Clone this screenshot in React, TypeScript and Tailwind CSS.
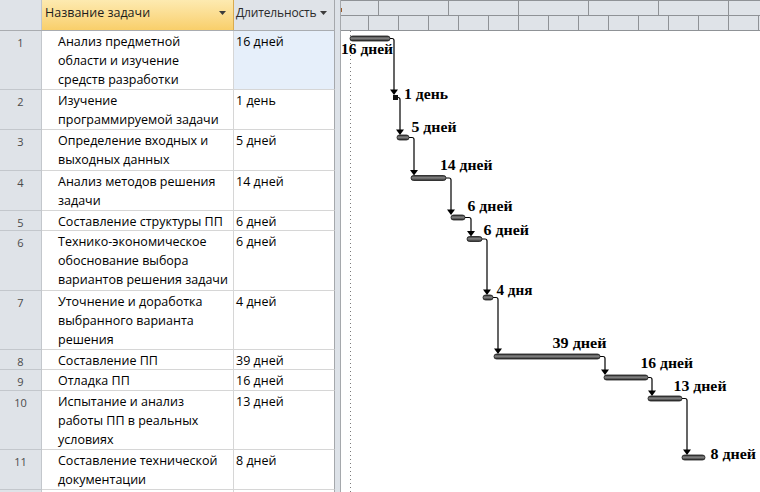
import React from 'react';

interface Row {
  n: number;
  name: string[];
  dur: string;
  h: number;
}

const rows: Row[] = [
  { n: 1, name: ['Анализ предметной', 'области и изучение', 'средств разработки'], dur: '16 дней', h: 59 },
  { n: 2, name: ['Изучение', 'программируемой задачи'], dur: '1 день', h: 40 },
  { n: 3, name: ['Определение входных и', 'выходных данных'], dur: '5 дней', h: 41 },
  { n: 4, name: ['Анализ методов решения', 'задачи'], dur: '14 дней', h: 40 },
  { n: 5, name: ['Составление структуры ПП'], dur: '6 дней', h: 20 },
  { n: 6, name: ['Технико-экономическое', 'обоснование выбора', 'вариантов решения задачи'], dur: '6 дней', h: 60 },
  { n: 7, name: ['Уточнение и доработка', 'выбранного варианта', 'решения'], dur: '4 дней', h: 59 },
  { n: 8, name: ['Составление ПП'], dur: '39 дней', h: 20 },
  { n: 9, name: ['Отладка ПП'], dur: '16 дней', h: 21 },
  { n: 10, name: ['Испытание и анализ', 'работы ПП в реальных', 'условиях'], dur: '13 дней', h: 59 },
  { n: 11, name: ['Составление технической', 'документации'], dur: '8 дней', h: 40 },
];

// bars in page coordinates
interface Bar {
  x1: number;
  x2: number;
  top: number;
  label: string;
  lx: number;
  ly: number;
  lw: number; // label width
  vx?: number; // vertical connector x to the next bar
}

const bars: Bar[] = [
  { x1: 350, x2: 390, top: 36, label: '16 дней', lx: 341, ly: 54, lw: 52, vx: 394 },
  { x1: 393, x2: 398, top: 95, label: '1 день', lx: 404, ly: 99, lw: 44, vx: 400 },
  { x1: 397, x2: 409, top: 135, label: '5 дней', lx: 411.5, ly: 132, lw: 45, vx: 414 },
  { x1: 411, x2: 446, top: 175.5, label: '14 дней', lx: 440, ly: 170, lw: 52.5, vx: 451 },
  { x1: 451, x2: 465, top: 215, label: '6 дней', lx: 467.5, ly: 211, lw: 45, vx: 471 },
  { x1: 467, x2: 482, top: 236.5, label: '6 дней', lx: 483.5, ly: 235, lw: 45.5, vx: 487 },
  { x1: 483, x2: 493, top: 295, label: '4 дня', lx: 496.5, ly: 295, lw: 36, vx: 498 },
  { x1: 494, x2: 600, top: 354, label: '39 дней', lx: 552.5, ly: 347.5, lw: 54, vx: 605 },
  { x1: 604, x2: 648, top: 375, label: '16 дней', lx: 640.5, ly: 367.5, lw: 52.5, vx: 652 },
  { x1: 648, x2: 682, top: 396, label: '13 дней', lx: 673.5, ly: 391, lw: 53, vx: 687 },
  { x1: 682, x2: 705, top: 455, label: '8 дней', lx: 710.5, ly: 459, lw: 45.5 },
];

const topTier = [38, 70, 70, 70, 70, 70, 70];
const bottomTier = [28, 30, 30, 30, 30, 30, 30, 30, 30, 30, 30, 30, 30, 30, 30];

const DropArrow = () => (
  <svg width="7" height="4" viewBox="0 0 7 4" className="shrink-0">
    <path d="M0 0 H7 L3.5 4 Z" fill="#3c3c3c" />
  </svg>
);

const TaskTable = () => (
  <div className="flex flex-col w-[335px] shrink-0">
    {/* Header */}
    <div className="flex h-[31px] shrink-0 border-b border-[#a9acb0]">
      <div className="w-[42px] shrink-0 bg-[#dfe3e8] border-r border-[#c2c6cb]" />
      <div className="w-[192px] shrink-0 flex items-start justify-between pl-[3px] pr-[7px] pt-[4px] bg-gradient-to-b from-[#fdeab0] to-[#f9cf6a] border-r border-[#d9ab4f]">
        <span className="text-[12.5px] leading-[17px] text-[#1c1c1c]">Название задачи</span>
        <div className="pt-[7px]"><DropArrow /></div>
      </div>
      <div className="w-[101px] shrink-0 flex items-start justify-between pl-[2px] pr-[7px] pt-[4px] bg-[#dfe3e8] border-r border-[#a5a8ac]">
        <span className="text-[12px] leading-[17px] tracking-[-0.15px] text-[#2a2a2a]">Длительность</span>
        <div className="pt-[7px]"><DropArrow /></div>
      </div>
    </div>
    {/* Rows */}
    {rows.map((r) => (
      <div key={r.n} className="flex shrink-0" style={{ height: r.h }}>
        <div className="w-[42px] shrink-0 bg-[#dfe3e8] border-r border-b border-[#c3c7cc] flex justify-center pt-[3px]">
          <span className="text-[11px] leading-[17px] text-[#4a4a4a]">{r.n}</span>
        </div>
        <div className="w-[192px] shrink-0 border-r border-b border-[#d6d6d6] pl-[16px] pt-[1px] bg-white">
          {r.name.map((l) => (
            <div key={l} className="text-[12.5px] leading-[19px] text-black whitespace-nowrap">{l}</div>
          ))}
        </div>
        <div className={`w-[101px] shrink-0 border-r border-b border-r-[#a5a8ac] border-b-[#d6d6d6] pl-[2px] pt-[1px] ${r.n === 1 ? 'bg-[#e6effa]' : 'bg-white'}`}>
          <div className="text-[12.5px] leading-[19px] text-black whitespace-nowrap">{r.dur}</div>
        </div>
      </div>
    ))}
    <div className="flex flex-1">
      <div className="w-[42px] shrink-0 bg-[#dfe3e8] border-r border-[#c3c7cc]" />
      <div className="w-[192px] shrink-0 border-r border-[#d6d6d6] bg-white" />
      <div className="w-[101px] shrink-0 border-r border-[#a5a8ac] bg-white" />
    </div>
  </div>
);

const GanttChart = () => (
  <div className="relative flex flex-col flex-1 min-w-0 overflow-hidden">
    {/* Timescale */}
    <div className="flex flex-col h-[31px] shrink-0 bg-[#dfe3e8] border-t border-b border-[#8f9296]">
      <div className="flex h-[15px] border-b border-[#8f9296]">
        {topTier.map((w, i) => (
          <div key={i} className="shrink-0 border-r border-[#8f9296]" style={{ width: w }} />
        ))}
      </div>
      <div className="flex flex-1">
        {bottomTier.map((w, i) => (
          <div key={i} className="shrink-0 border-r border-[#8f9296]" style={{ width: w }} />
        ))}
      </div>
    </div>
    <div className="absolute left-0 top-[8px] w-px h-[4px] bg-[#9a5a2a]" />
    {/* Body */}
    <div className="relative flex-1 bg-white">
      <svg className="absolute inset-0" width="419" height="461" viewBox="341 31 419 461">
        <defs>
          <linearGradient id="bar" x1="0" y1="0" x2="0" y2="1">
            <stop offset="0" stopColor="#2e2e2e" />
            <stop offset="0.45" stopColor="#858585" />
            <stop offset="1" stopColor="#2a2a2a" />
          </linearGradient>
        </defs>
        <line x1="350.5" y1="31" x2="350.5" y2="492" stroke="#7a7a7a" strokeWidth="1" strokeDasharray="1 3" />
        {bars.map((b, i) => {
          const next = bars[i + 1];
          const mid = b.top + 2.5;
          return (
            <g key={i}>
              {next && b.vx !== undefined && (
                <>
                  <path
                    d={`M${b.x2} ${mid} H${b.vx - 2} Q${b.vx} ${mid} ${b.vx} ${mid + 2} V${next.top - 4}`}
                    fill="none"
                    stroke="#000"
                    strokeWidth="1.2"
                  />
                  <path d={`M${b.vx - 4} ${next.top - 5.5} H${b.vx + 4} L${b.vx} ${next.top} Z`} fill="#000" />
                </>
              )}
              {i === 1 ? (
                <rect x={b.x1} y={b.top} width={b.x2 - b.x1} height={5} fill="#111" />
              ) : (
                <rect
                  x={b.x1}
                  y={b.top}
                  width={b.x2 - b.x1}
                  height={5}
                  rx={2.5}
                  fill="url(#bar)"
                  stroke="#1b1b1b"
                  strokeWidth="0.8"
                />
              )}
              <text
                x={b.lx}
                y={b.ly}
                textLength={b.lw}
                lengthAdjust="spacingAndGlyphs"
                fontFamily="'Liberation Serif', 'Times New Roman', serif"
                fontWeight="bold"
                fontSize="14.5"
                fill="#000"
              >
                {b.label}
              </text>
            </g>
          );
        })}
      </svg>
    </div>
  </div>
);

export default function App() {
  return (
    <div
      className="flex w-[760px] h-[492px] overflow-hidden bg-white"
      style={{ fontFamily: "'Open Sans', 'Noto Sans', sans-serif" }}
    >
      <TaskTable />
      {/* splitter */}
      <div className="w-[6px] shrink-0 bg-[#dde2e8] border-r border-[#a5a8ac]" />
      <GanttChart />
    </div>
  );
}
